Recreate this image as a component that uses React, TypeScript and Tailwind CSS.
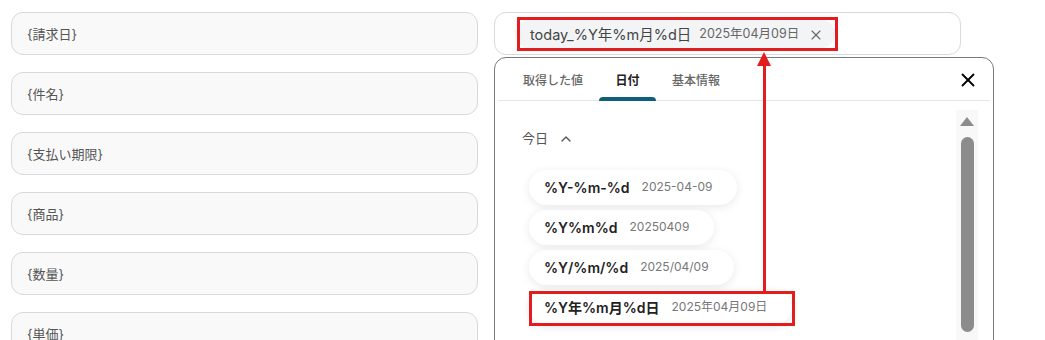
import { ChevronUp, X } from "lucide-react";

const fields = ["{請求日}", "{件名}", "{支払い期限}", "{商品}", "{数量}", "{単価}"];

const formats = [
  { fmt: "%Y-%m-%d", val: "2025-04-09" },
  { fmt: "%Y%m%d", val: "20250409" },
  { fmt: "%Y/%m/%d", val: "2025/04/09" },
  { fmt: "%Y年%m月%d日", val: "2025年04月09日", marked: true },
];

const font = "font-['Inter','Noto_Sans_CJK_JP',sans-serif]";

export default function App() {
  return (
    <div className={`relative h-[340px] w-[1045px] overflow-hidden bg-white ${font}`}>
      <div className="flex gap-4 pl-[11px] pt-3">
        <div className="flex w-[467px] flex-col gap-[17px]">
          {fields.map((f) => (
            <div
              key={f}
              className="flex h-[43px] items-center rounded-xl border border-[#d6d9de] bg-[#f9f9f9] px-[15px] pt-[2px] text-[13px] text-[#555]"
            >
              {f}
            </div>
          ))}
        </div>

        <div className="relative w-[467px]">
          <div className="flex h-[43px] items-center rounded-xl border border-[#d6d9de] bg-white pl-[20px]">
            <div className="flex h-[28px] items-center gap-2 rounded-full bg-[#f3f4f5] pl-[15px] pr-[11px] pt-[2px] text-[14.5px] text-[#444]">
              <span>today_%Y年%m月%d日</span>
              <span className="text-[12.5px] text-[#666]">2025年04月09日</span>
              <X className="ml-[1px] h-4 w-4 text-[#666]" strokeWidth={1.6} />
            </div>
          </div>

          <div className="absolute left-0 top-[45px] h-[300px] w-[500px] rounded-t-xl border border-[#7a7a7a] bg-white">
            <div className="mx-[3px] flex h-[43px] items-end border-b border-[#e6e6e6] pl-[25px] text-[12px] font-medium">
              <div className="flex h-full items-center pr-[16px] pt-[3px] text-[#666]">取得した値</div>
              <div className="relative flex h-full w-[57px] items-center justify-center pt-[3px] font-semibold text-[#222]">
                日付
                <div className="absolute bottom-[-1px] left-0 h-[4px] w-full rounded-t bg-[#0e5f79]" />
              </div>
              <div className="flex h-full items-center pl-[16px] pt-[3px] text-[#666]">基本情報</div>
              <X className="ml-auto mr-[11px] mt-[2px] h-[22px] w-[22px] self-center text-black" strokeWidth={2} />
            </div>

            <div className="flex">
              <div className="flex-1 pl-[27px] pt-[28px]">
                <div className="flex items-center gap-[10px] text-[13px] text-[#555]">
                  今日
                  <ChevronUp className="h-4 w-4 text-[#555]" strokeWidth={2} />
                </div>
                <div className="mt-[21px] flex flex-col items-start gap-[5px] pl-[7px]">
                  {formats.map((f) => (
                    <div
                      key={f.fmt}
                      className="flex h-[35px] items-center gap-3 rounded-full bg-white pl-[15px] pr-[25px] shadow-[0_2px_10px_rgba(0,0,0,0.09)]"
                    >
                      <span className="text-[14px] font-semibold text-[#222]">{f.fmt}</span>
                      <span className="text-[12px] text-[#777]">{f.val}</span>
                    </div>
                  ))}
                </div>
              </div>

              <div className="mr-[15px] mt-[9px] flex h-[240px] w-[22px] flex-col items-center bg-[#f8f8f8] pt-[7px]">
                <div className="h-0 w-0 border-x-[7px] border-b-[9px] border-x-transparent border-b-[#8c8c8c]" />
                <div className="mt-[11px] h-[195px] w-[13px] rounded-full bg-[#8c8c8c]" />
              </div>
            </div>
          </div>
        </div>
      </div>

      {/* red annotation */}
      <div className="pointer-events-none absolute left-[517px] top-[17px] h-[34px] w-[321px] border-[3px] border-[#e11d1d]" />
      <div className="pointer-events-none absolute left-[529px] top-[291px] h-[35px] w-[266px] border-[3px] border-[#e11d1d]" />
      <div className="pointer-events-none absolute left-[763px] top-[62px] h-[229px] w-[3px] bg-[#e11d1d]" />
      <div className="pointer-events-none absolute left-[757px] top-[52px] h-0 w-0 border-x-[7.5px] border-b-[14px] border-x-transparent border-b-[#e11d1d]" />
    </div>
  );
}
